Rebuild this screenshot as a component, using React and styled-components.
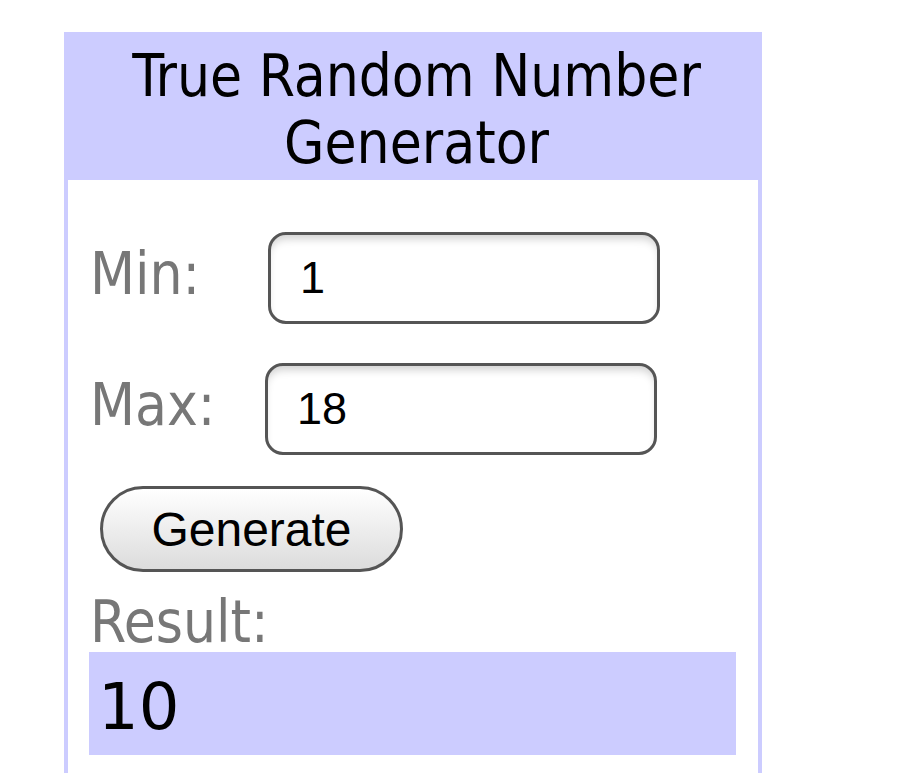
import React, { useState } from 'react';
import styled, { createGlobalStyle } from 'styled-components';

const GlobalStyle = createGlobalStyle`
  body {
    margin: 0;
    background: #fff;
    font-family: "DejaVu Sans Condensed", "DejaVu Sans", Verdana, sans-serif;
    font-stretch: condensed;
  }
`;

const Widget = styled.div`
  width: 698px;
  margin: 32px 0 0 64px;
  box-sizing: border-box;
`;

const Header = styled.div`
  background: #ccccff;
  padding: 11px 0 3px 7px;
  text-align: center;
  font-size: 58px;
  line-height: 67px;
  color: #000;
`;

const Body = styled.div`
  border-left: 4px solid #ccccff;
  border-right: 4px solid #ccccff;
  padding: 52px 22px 18px 22px;
`;

const Row = styled.div`
  display: flex;
  align-items: center;
  margin-bottom: ${(p) => p.$spacing}px;
`;

const Label = styled.label`
  display: block;
  width: ${(p) => p.$width}px;
  flex-shrink: 0;
  font-size: 58px;
  line-height: 66px;
  color: #777;
  margin-bottom: 8px;
`;

const Field = styled.input`
  width: 392px;
  height: 92px;
  box-sizing: border-box;
  border: 3px solid #555;
  border-radius: 18px;
  padding: 0 0 0 29px;
  font-family: "Liberation Sans", Arial, sans-serif;
  font-size: 45px;
  color: #000;
  background: #fff;
  box-shadow: inset 0 7px 8px -3px rgba(0, 0, 0, 0.18);
  outline: none;
`;

const GenerateButton = styled.button`
  display: block;
  width: 303px;
  height: 86px;
  margin-left: 10px;
  box-sizing: border-box;
  border: 3px solid #555;
  border-radius: 43px;
  background: linear-gradient(#ffffff, #dcdcdc);
  font-family: "Liberation Sans", Arial, sans-serif;
  font-size: 48px;
  color: #000;
  cursor: pointer;
`;

const ResultLabel = styled.div`
  margin-top: 20px;
  font-size: 58px;
  line-height: 60px;
  color: #777;
`;

const ResultBox = styled.div`
  display: flex;
  align-items: center;
  height: 103px;
  box-sizing: border-box;
  padding: 6px 10px 0 9px;
  margin-left: -1px;
  background: #ccccff;
  font-family: "DejaVu Sans", Verdana, sans-serif;
  font-stretch: normal;
  font-size: 64px;
  color: #000;
`;

export default function App() {
  const [min, setMin] = useState('1');
  const [max, setMax] = useState('18');
  const [result, setResult] = useState(10);

  const generate = () => {
    const lo = parseInt(min, 10);
    const hi = parseInt(max, 10);
    if (Number.isNaN(lo) || Number.isNaN(hi) || hi < lo) return;
    setResult(lo + Math.floor(Math.random() * (hi - lo + 1)));
  };

  return (
    <>
      <GlobalStyle />
      <Widget>
        <Header>
          True Random Number
          <br />
          Generator
        </Header>
        <Body>
          <Row $spacing={39}>
            <Label $width={178}>Min:</Label>
            <Field value={min} onChange={(e) => setMin(e.target.value)} />
          </Row>
          <Row $spacing={31}>
            <Label $width={175}>Max:</Label>
            <Field value={max} onChange={(e) => setMax(e.target.value)} />
          </Row>
          <GenerateButton onClick={generate}>Generate</GenerateButton>
          <ResultLabel>Result:</ResultLabel>
          <ResultBox>{result}</ResultBox>
        </Body>
      </Widget>
    </>
  );
}
